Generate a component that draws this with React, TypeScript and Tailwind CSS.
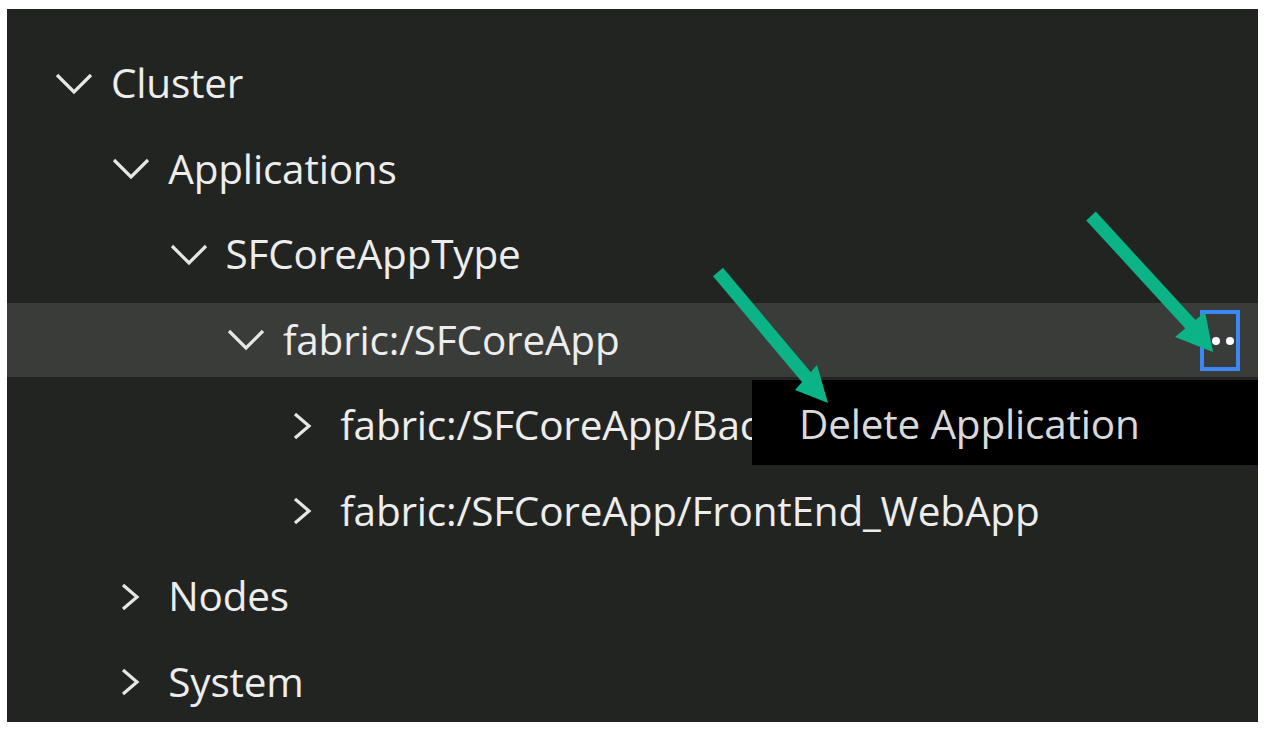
import React from "react";

type Node = { label: string; level: number; open: boolean; selected?: boolean; clip?: number };

const rows: Node[] = [
  { label: "Cluster", level: 0, open: true },
  { label: "Applications", level: 1, open: true },
  { label: "SFCoreAppType", level: 2, open: true },
  { label: "fabric:/SFCoreApp", level: 3, open: true, selected: true },
  // the context menu covers the end of this one
  { label: "fabric:/SFCoreApp/BackEnd_WebApi", level: 4, open: false, clip: 412 },
  { label: "fabric:/SFCoreApp/FrontEnd_WebApp", level: 4, open: false },
  { label: "Nodes", level: 1, open: false },
  { label: "System", level: 1, open: false },
];

function Chevron({ open }: { open: boolean }) {
  return open ? (
    <svg width="38" height="24" viewBox="0 0 38 24" fill="none">
      <path d="M2 3 L19 20 L36 3" stroke="#e6e6e6" strokeWidth="3.2" />
    </svg>
  ) : (
    <svg width="38" height="28" viewBox="0 0 38 28" fill="none">
      <path d="M11 2 L25 14 L11 26" stroke="#e6e6e6" strokeWidth="3.2" />
    </svg>
  );
}

function Row({ node }: { node: Node }) {
  return (
    <div className="h-[85.5px] flex items-center shrink-0">
      <div
        className={
          "w-full h-[74px] flex items-center " +
          (node.selected ? "bg-[#3a3c3a]" : "")
        }
        style={{ paddingLeft: 48 + node.level * 57.3 }}
      >
        <span className="w-[38px] flex justify-center">
          <Chevron open={node.open} />
        </span>
        <span
          className="ml-[18px] whitespace-nowrap overflow-hidden"
          style={node.clip ? { maxWidth: node.clip } : undefined}
        >
          {node.label}
        </span>
      </div>
    </div>
  );
}

export default function App() {
  return (
    <div className="w-[1265px] h-[732px] bg-white relative overflow-hidden">
      <div className="absolute left-[7px] top-[9px] w-[1251px] h-[713px] bg-[#222422] overflow-hidden text-[#ededed] text-[40.5px] font-medium font-['Open_Sans',sans-serif] tracking-[-0.2px] flex flex-col pt-[32px]">
        {rows.map((r) => (
          <Row key={r.label} node={r} />
        ))}

        {/* more actions button */}
        <div className="absolute left-[1193px] top-[301px] w-[40px] h-[61px] border-[4px] border-[#3b87f5] flex items-center overflow-hidden">
          <span className="ml-[8px] flex gap-[6px]">
            <span className="w-[8px] h-[8px] rounded-full bg-white"></span>
            <span className="w-[8px] h-[8px] rounded-full bg-white"></span>
            <span className="w-[8px] h-[8px] rounded-full bg-white"></span>
          </span>
        </div>

        {/* context menu */}
        <div className="absolute left-[745px] top-[371px] right-0 h-[85px] bg-black flex items-center pl-[47px] pt-[4px] text-[#d9d9d9]">
          Delete Application
        </div>
      </div>

      <svg className="absolute inset-0 pointer-events-none" width="1265" height="732">
        <line x1="718" y1="272" x2="808" y2="379" stroke="#0bb386" strokeWidth="13" />
        <polygon points="795,390 817,365 828,403" fill="#0bb386" />
        <line x1="1091" y1="216" x2="1192" y2="326" stroke="#0bb386" strokeWidth="13" />
        <polygon points="1175,337 1205,312 1213,352" fill="#0bb386" />
      </svg>
    </div>
  );
}
